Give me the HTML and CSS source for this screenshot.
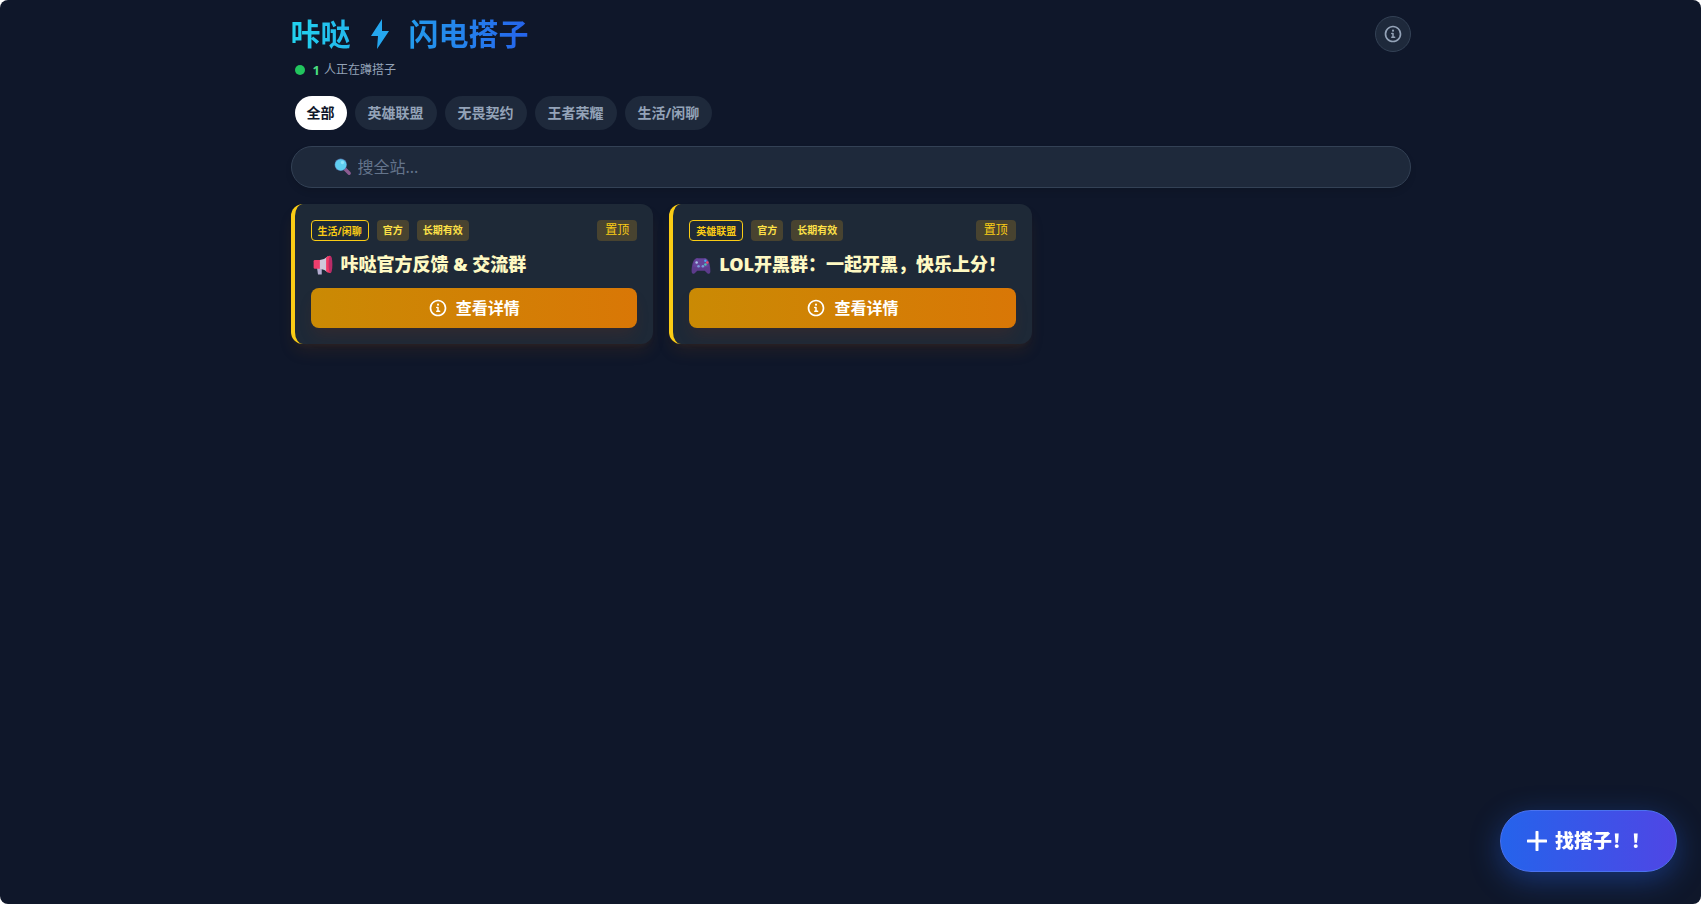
FILE: index.html
```html
<!DOCTYPE html>
<html lang="zh-CN">
<head>
  <meta charset="UTF-8">
  <meta name="viewport" content="width=device-width, initial-scale=1.0">
  <title>咔哒 - 闪电搭子</title>
  <link rel="stylesheet" href="styles.css">
</head>
<body>

  <!-- Shared icons -->
  <svg class="sprite" aria-hidden="true">
    <symbol id="icon-info" viewBox="0 0 24 24">
      <path fill="currentColor" d="M12 22C6.477 22 2 17.523 2 12S6.477 2 12 2s10 4.477 10 10-4.477 10-10 10zm0-2a8 8 0 1 0 0-16 8 8 0 0 0 0 16z"/>
      <circle cx="12" cy="8" r="1.300" fill="currentColor"/>
      <path d="M10.500 11.500H12V16m-1.500 0h3.500" fill="none" stroke="currentColor" stroke-width="1.800" stroke-linecap="round" stroke-linejoin="round"/>
    </symbol>
  </svg>

  <div class="app">
    <main class="container">

      <header class="header">
        <div>
          <h1 class="logo">
            <span>咔哒</span>
            <svg class="logo-bolt" viewBox="0 0 18 30" aria-hidden="true"><path d="M11 0L0 17h7L6 30 18 12h-7z"/></svg>
            <span>闪电搭子</span>
          </h1>
          <p class="online"><span class="online-dot"></span><b>1</b> 人正在蹲搭子</p>
        </div>
        <button class="info-btn" type="button" aria-label="关于">
          <svg class="icon"><use href="#icon-info"/></svg>
        </button>
      </header>

      <nav class="tabs">
        <button class="tab active" type="button">全部</button>
        <button class="tab" type="button">英雄联盟</button>
        <button class="tab" type="button">无畏契约</button>
        <button class="tab" type="button">王者荣耀</button>
        <button class="tab" type="button">生活/闲聊</button>
      </nav>

      <label class="search">
        <svg class="search-icon" viewBox="0 0 32 32" aria-label="搜索">
          <path d="M19 19l8 8" stroke="#8c5b91" stroke-width="6" stroke-linecap="round"/>
          <circle cx="12" cy="12" r="11" fill="#4f6fa3"/>
          <circle cx="12" cy="12" r="10" fill="#5fcdf0"/>
          <circle cx="15" cy="8" r="3" fill="#8be3fb"/>
        </svg>
        <input type="text" placeholder="搜全站...">
      </label>

      <div class="grid">
        <article class="card">
          <div class="tags">
            <span class="tag tag-outline">生活/闲聊</span>
            <span class="tag">官方</span>
            <span class="tag">长期有效</span>
            <span class="pin">置顶</span>
          </div>
          <h3 class="card-title">
            <svg class="emoji" viewBox="0 0 32 32" aria-hidden="true">
              <path d="M6 18h8v13H8z" fill="#b4acd0"/>
              <path d="M3 8h10v14H3q-2 0-2-2V10q0-2 2-2z" fill="#ef3e6d"/>
              <path d="M11 8q8-1 13-6v26q-5-5-13-6z" fill="#cfc8dc"/>
              <path d="M21 4q6-5 8-1v24q-2 4-8-1z" fill="#f23a67"/>
              <ellipse cx="28" cy="15" rx="3" ry="14" fill="#b82c68"/>
            </svg>
            咔哒官方反馈 &amp; 交流群
          </h3>
          <button class="detail-btn" type="button"><svg class="icon"><use href="#icon-info"/></svg>查看详情</button>
        </article>

        <article class="card">
          <div class="tags">
            <span class="tag tag-outline">英雄联盟</span>
            <span class="tag">官方</span>
            <span class="tag">长期有效</span>
            <span class="pin">置顶</span>
          </div>
          <h3 class="card-title">
            <svg class="emoji" viewBox="0 0 32 32" aria-hidden="true">
              <path d="M7 6q2-2 5-1h8q3-1 5 1c4 2 6 12 6 20 0 4-2 5-5 3l-4-4H10l-4 4c-3 2-5 1-5-3C1 18 3 8 7 6z" fill="#5d3b8c"/>
              <path d="M8 6h16q4 5 5 12-13 5-26 0Q4 11 8 6z" fill="#65439a"/>
              <circle cx="9" cy="12" r="2" fill="#a9c3e8"/>
              <circle cx="12" cy="18" r="2" fill="#7a9bd8"/>
              <circle cx="19" cy="18" r="2" fill="#7a9bd8"/>
              <circle cx="23" cy="9" r="2" fill="#45a9f0"/>
              <circle cx="26" cy="12" r="2" fill="#f1476b"/>
              <circle cx="23" cy="15" r="2" fill="#48c5b0"/>
            </svg>
            LOL开黑群：一起开黑，快乐上分！
          </h3>
          <button class="detail-btn" type="button"><svg class="icon"><use href="#icon-info"/></svg>查看详情</button>
        </article>
      </div>

    </main>

    <button class="post-btn" type="button">
      <svg class="plus" viewBox="0 0 20 20" aria-hidden="true"><path d="M10 1v18M1 10h18"/></svg>
      找搭子！！
    </button>
  </div>

</body>
</html>
```
FILE: styles.css
```css
* {
  box-sizing: border-box;
}
body {
  margin: 0;
  background-color: #fff;
  color: #f1f5f9;
  font-family: "Noto Sans", "Noto Sans CJK SC", sans-serif;
}
button,
input {
  font-family: inherit;
}
button {
  cursor: pointer;
}
h1, h3, p {
  margin: 0;
}
.sprite {
  position: absolute;
  width: 0;
  height: 0;
}
.icon {
  width: 20px;
  height: 20px;
  flex-shrink: 0;
}
.app {
  min-height: 100vh;
  background-color: #0f172a;
  border-radius: 8px;
}
.container {
  max-width: 1152px;
  margin: 0 auto;
  padding: 16px;
}

/* Header */
.header {
  display: flex;
  justify-content: space-between;
  align-items: flex-start;
}
.logo {
  display: flex;
  align-items: center;
  width: max-content;
  font-size: 30px;
  line-height: 36px;
  font-weight: 700;
  background: linear-gradient(to right, #22d3ee, #2563eb);
  -webkit-background-clip: text;
  background-clip: text;
  color: transparent;
}
.logo-bolt {
  width: 18px;
  height: 30px;
  margin: 0 20px;
  fill: #25a7ef;
}
.online {
  display: flex;
  align-items: center;
  margin: 8px 0 0 4px;
  font-size: 12px;
  line-height: 20px;
  color: #94a3b8;
}
.online b {
  margin-right: 4px;
  font-size: 13px;
  color: #4ade80;
}
.online-dot {
  width: 10px;
  height: 10px;
  margin-right: 8px;
  border-radius: 50%;
  background-color: #22c55e;
}
.info-btn {
  display: flex;
  align-items: center;
  justify-content: center;
  width: 36px;
  height: 36px;
  padding: 0;
  border: 1px solid #334155;
  border-radius: 50%;
  background-color: #1e293b;
  color: #94a3b8;
}

/* Category tabs */
.tabs {
  display: flex;
  gap: 8px;
  margin: 16px 4px;
}
.tab {
  height: 34px;
  padding: 0 13px 2px;
  border: 0;
  border-radius: 17px;
  background-color: #1e293b;
  color: #94a3b8;
  font-size: 14px;
  font-weight: 700;
}
.tab.active {
  padding: 0 12px 2px;
  background-color: #fff;
  color: #0f172a;
}

/* Search */
.search {
  display: flex;
  align-items: center;
  height: 42px;
  padding: 0 42px;
  border: 1px solid #334155;
  border-radius: 21px;
  background-color: #1e293b;
  box-shadow: 0 4px 6px rgba(0, 0, 0, 0.1);
}
.search-icon {
  width: 18px;
  height: 18px;
  margin-right: 6px;
}
.search input {
  flex: 1;
  padding: 0;
  border: 0;
  outline: none;
  background: none;
  color: #fff;
  font-size: 16px;
}
.search input::placeholder {
  color: #64748b;
}

/* Cards */
.grid {
  display: grid;
  grid-template-columns: repeat(auto-fill, minmax(340px, 1fr));
  gap: 16px;
  margin-top: 16px;
}
.card {
  padding: 16px;
  border-left: 4px solid #facc15;
  border-radius: 12px;
  background-color: #1e2937;
  box-shadow: 0 10px 15px -3px rgba(113, 63, 18, 0.2), 0 4px 6px -4px rgba(113, 63, 18, 0.2);
}
.tags {
  display: flex;
  gap: 8px;
}
.tag,
.pin {
  height: 21px;
  padding: 0 6px;
  border-radius: 4px;
  background-color: #484330;
  color: #fde047;
  font-size: 10px;
  line-height: 20px;
  font-weight: 700;
}
.tag-outline {
  border: 1px solid #facc15;
  background: none;
  color: #facc15;
}
.pin {
  margin-left: auto;
  padding: 0 8px;
  color: #facc15;
  font-size: 12px;
  font-weight: 400;
}
.card-title {
  display: flex;
  align-items: center;
  gap: 8px;
  margin: 8px 0;
  padding-left: 2px;
  font-size: 18px;
  line-height: 31px;
  font-weight: 900;
  color: #fef9c3;
}
.emoji {
  width: 20px;
  height: 20px;
}
.detail-btn {
  display: flex;
  align-items: center;
  justify-content: center;
  gap: 8px;
  width: 100%;
  height: 40px;
  border: 0;
  border-radius: 8px;
  background: linear-gradient(to right, #ca8a04, #d97706);
  color: #fff;
  font-size: 16px;
  line-height: 24px;
  font-weight: 700;
  box-shadow: 0 10px 15px -3px rgba(124, 45, 18, 0.2);
}

/* Floating post button */
.post-btn {
  position: fixed;
  right: 24px;
  bottom: 32px;
  display: flex;
  align-items: center;
  gap: 8px;
  height: 62px;
  padding: 0 26px;
  border: 1px solid #4b72ef;
  border-radius: 31px;
  background: linear-gradient(to right, #2563eb, #4f46e5);
  color: #fff;
  font-size: 19px;
  line-height: 28px;
  font-weight: 900;
  box-shadow: 0 8px 30px rgba(37, 99, 235, 0.4);
}
.plus {
  width: 20px;
  height: 20px;
  fill: none;
  stroke: #fff;
  stroke-width: 3;
  stroke-linecap: round;
}
```
